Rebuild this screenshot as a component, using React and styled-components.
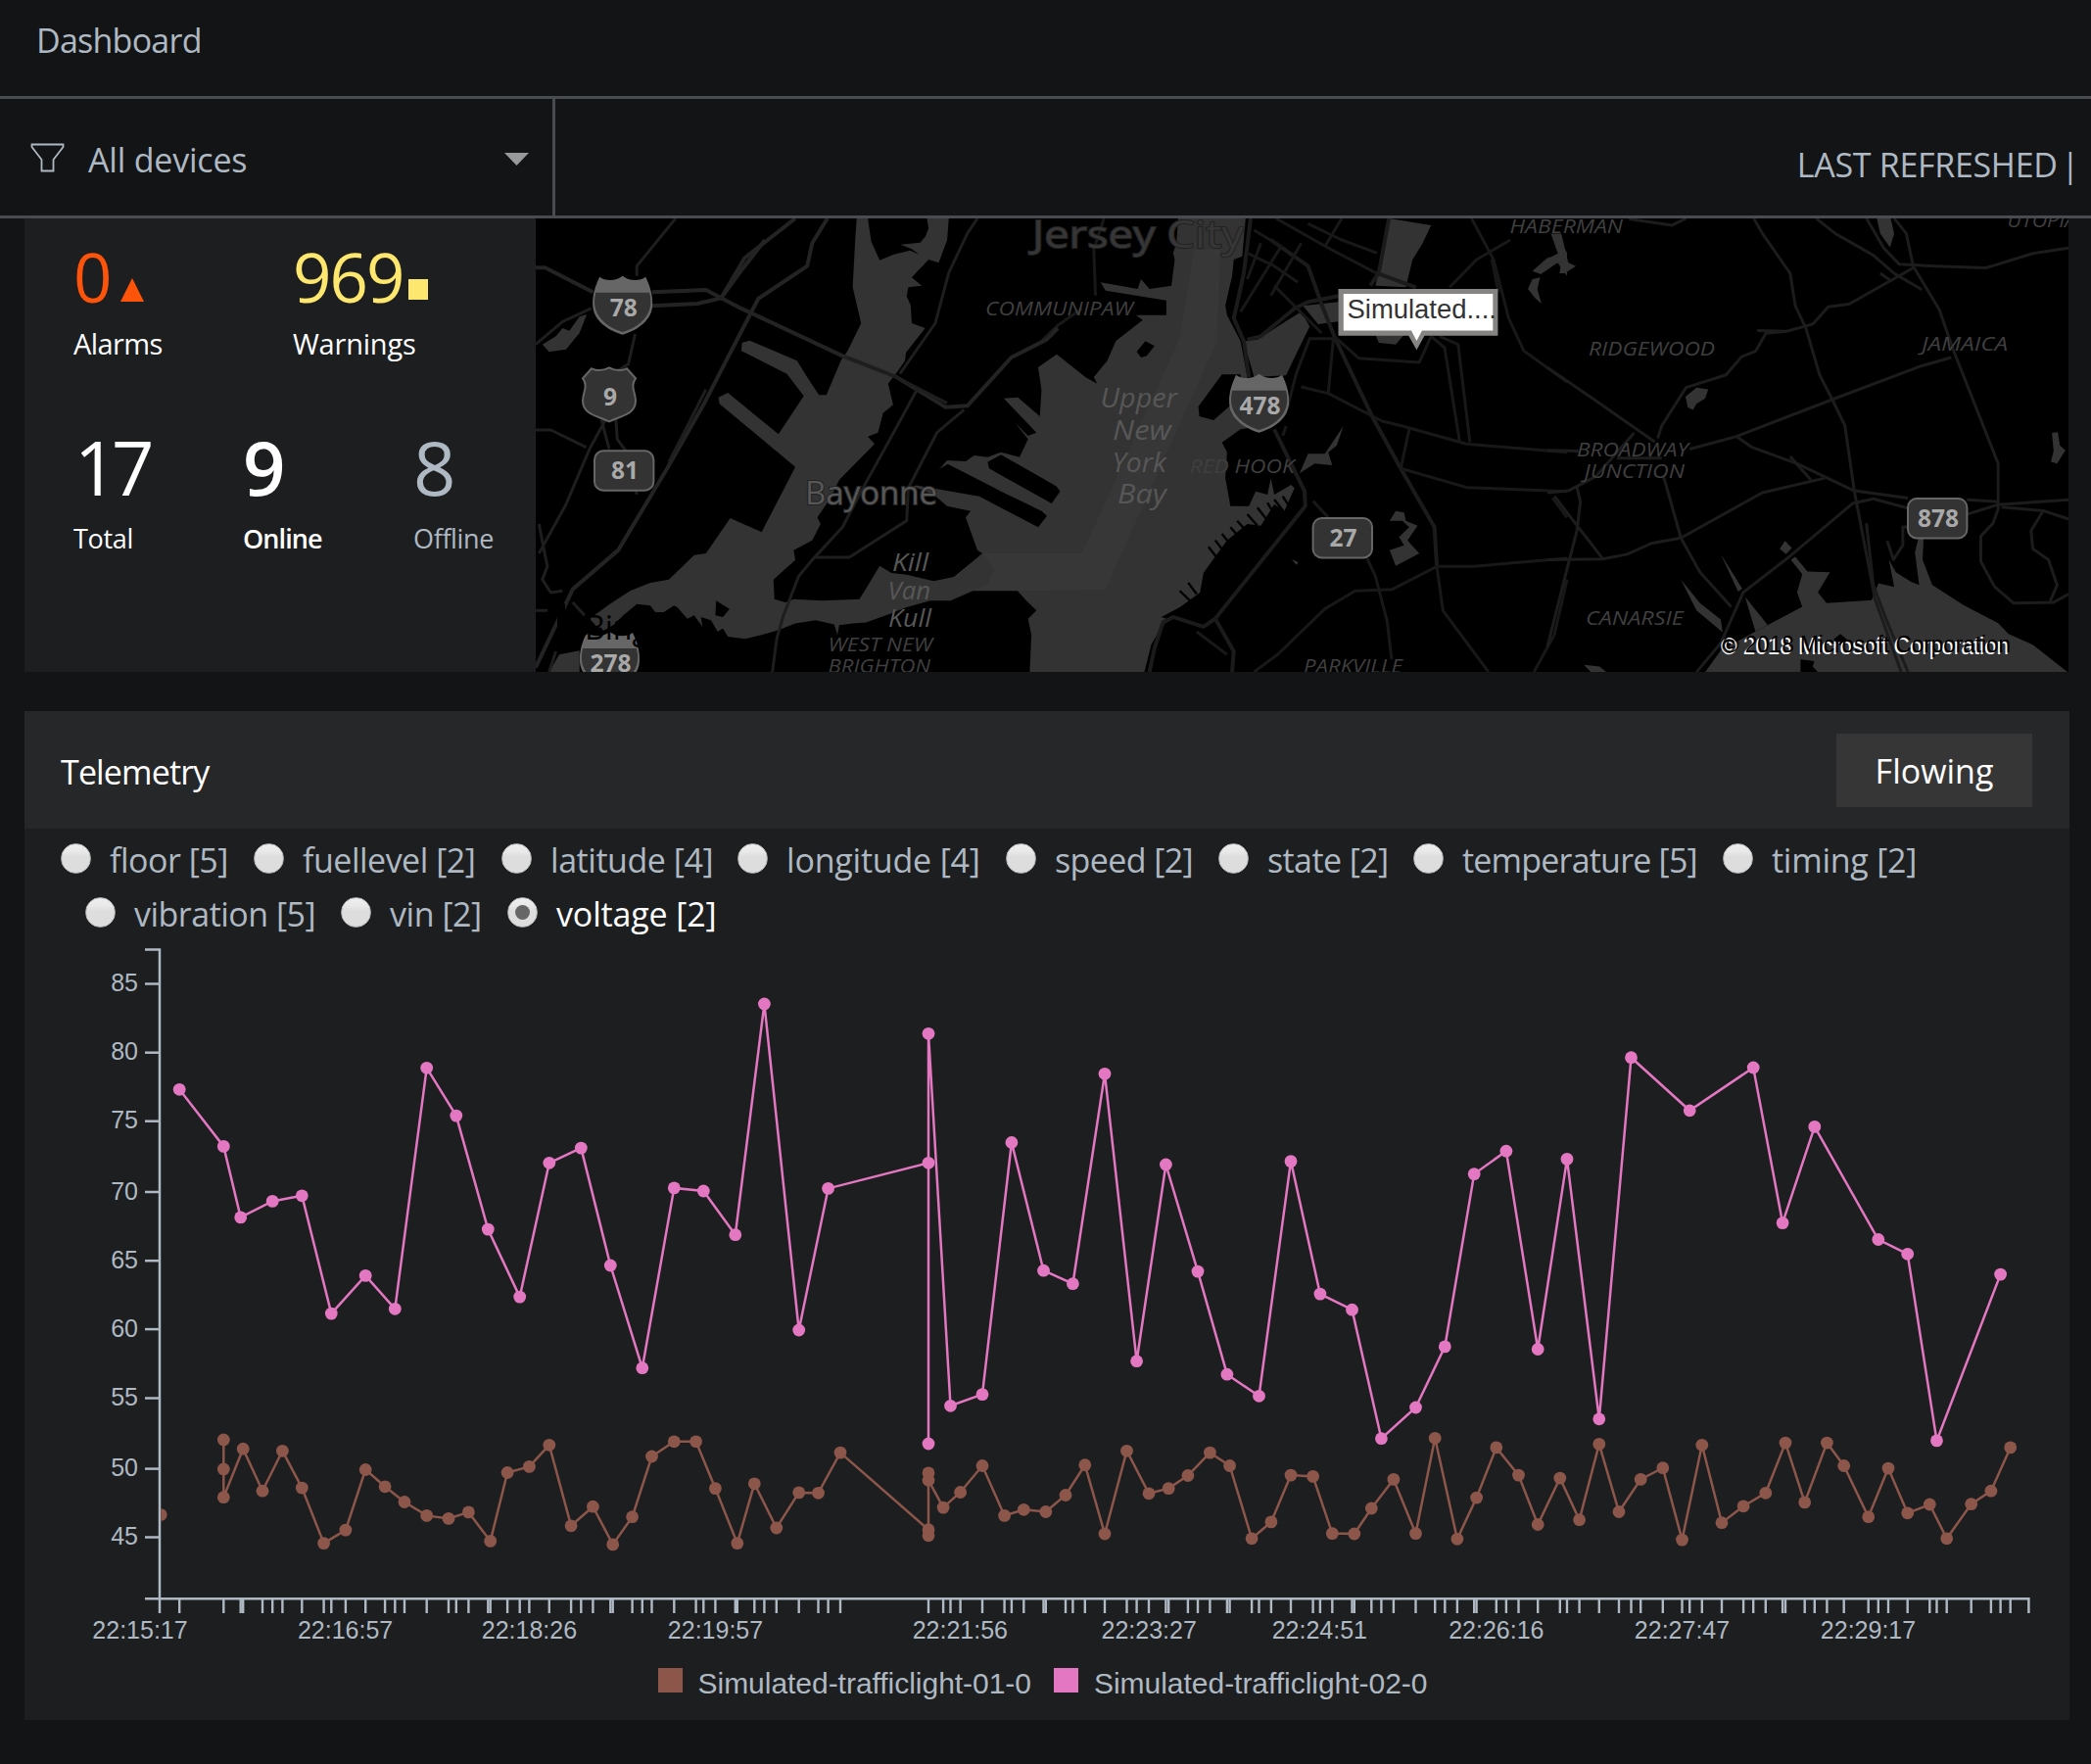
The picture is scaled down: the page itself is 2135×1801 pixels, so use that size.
import React from 'react';
import styled, { createGlobalStyle } from 'styled-components';

const UI_FONT = '"Open Sans", "Noto Sans", sans-serif';
const CHART_FONT = '"Liberation Sans", Arial, sans-serif';

const colors = {
  page: '#131416',
  panel: '#1d1e1f',
  panelHeader: '#262728',
  line: '#484c50',
  text: '#afb9c3',
  bright: '#ffffff',
  alarm: '#fc540a',
  warning: '#fee76e',
  button: '#363636',
  brown: '#8c564b',
  pink: '#e377c2',
};

const GlobalStyle = createGlobalStyle`
  body {
    margin: 0;
    background: ${colors.page};
    color: ${colors.text};
    font-family: ${UI_FONT};
    font-size: 34px;
    overflow: hidden;
  }
  * { box-sizing: border-box; }
`;

const Page = styled.div`
  display: flex;
  flex-direction: column;
  width: 2135px;
  height: 1801px;
  overflow: hidden;
`;

const Header = styled.header`
  flex: none;
  height: 101px;
  padding-left: 37px;
  border-bottom: 3px solid ${colors.line};
  line-height: 82px;
  letter-spacing: -0.75px;
`;

const Toolbar = styled.div`
  flex: none;
  display: flex;
  justify-content: space-between;
  height: 122px;
  border-bottom: 3px solid ${colors.line};
`;

const DeviceSelect = styled.div`
  display: flex;
  align-items: center;
  width: 567px;
  padding: 0 24px 0 31px;
  border-right: 3px solid ${colors.line};
`;

const SelectLabel = styled.span`
  flex: 1;
  margin-left: 24px;
  padding-top: 5px;
  letter-spacing: -0.2px;
`;

const Caret = styled.svg`
  flex: none;
  margin-top: 3px;
`;

const Refreshed = styled.div`
  display: flex;
  align-items: center;
  gap: 4px;
  padding: 14px 12px 0 0;
  letter-spacing: -0.3px;
`;

const Main = styled.main`
  display: flex;
  flex-direction: column;
  gap: 40px;
  padding: 0 22px 0 25px;
`;

const Overview = styled.section`
  display: flex;
  height: 463px;
`;

const Stats = styled.div`
  display: flex;
  flex-direction: column;
  gap: 56px;
  width: 522px;
  padding: 13px 0 0 50px;
  background: ${colors.panel};
`;

const StatRow = styled.div`
  display: grid;
  grid-template-columns: ${(p) => p.$columns};
`;

const Stat = styled.div`
  display: flex;
  flex-direction: column;
  gap: 3px;
  color: ${(p) => p.$color};
  font-weight: ${(p) => p.$weight || 400};
`;

const StatValue = styled.div`
  display: flex;
  align-items: flex-start;
  height: ${(p) => p.$line}px;
  padding-left: ${(p) => p.$inset || 0}px;
  color: ${(p) => p.$color || 'inherit'};
  font-size: ${(p) => p.$size}px;
  line-height: ${(p) => p.$line}px;
  letter-spacing: ${(p) => p.$track || 0}px;
`;

const StatLabel = styled.div`
  font-size: ${(p) => p.$size}px;
  line-height: 40px;
  letter-spacing: ${(p) => p.$track || 0}px;
`;

const StatGlyph = styled.svg`
  flex: none;
  margin: ${(p) => p.$margin};
`;

const MapCanvas = styled.svg`
  display: block;
  background: #000;
`;

const Telemetry = styled.section`
  display: flex;
  flex-direction: column;
  height: 1030px;
  background: ${colors.panel};
`;

const PanelHeader = styled.div`
  flex: none;
  display: flex;
  align-items: center;
  justify-content: space-between;
  height: 120px;
  padding: 0 38px 0 37px;
  background: ${colors.panelHeader};
  color: ${colors.bright};
`;

const PanelTitle = styled.h2`
  margin: 0;
  padding-top: 3px;
  font-size: 34px;
  font-weight: 400;
  letter-spacing: -0.85px;
`;

const FlowButton = styled.button`
  width: 200px;
  height: 75px;
  margin-top: 1px;
  padding: 0;
  border: 0;
  background: ${colors.button};
  color: ${colors.bright};
  font-family: inherit;
  font-size: 34px;
`;

const OptionList = styled.div`
  flex: none;
  display: flex;
  flex-direction: column;
  height: 114px;
  padding: 3px 0 0 37px;
`;

const OptionRow = styled.div`
  display: flex;
  height: 55px;
  padding-left: ${(p) => p.$indent || 0}px;
`;

const Option = styled.label`
  display: flex;
  align-items: center;
  gap: 19px;
  width: ${(p) => p.$width}px;
  color: ${(p) => (p.$selected ? colors.bright : colors.text)};
  letter-spacing: ${(p) => p.$track}px;
  white-space: nowrap;
`;

const OptionText = styled.span`
  padding-top: 2px;
`;

const Radio = styled.span`
  flex: none;
  display: flex;
  align-items: center;
  justify-content: center;
  width: 31px;
  height: 31px;
  border-radius: 50%;
  border: 1px solid #b4b4b4;
  background: linear-gradient(#eeeeee 0%, #e9e9e9 25%, #dddddd 45%, #dddddd 100%);
  &::after {
    content: '';
    display: ${(p) => (p.$selected ? 'block' : 'none')};
    width: 15px;
    height: 15px;
    border-radius: 50%;
    background: #666;
  }
`;

const Chart = styled.svg`
  flex: none;
  display: block;
`;

const Legend = styled.div`
  display: flex;
  justify-content: center;
  gap: 23px;
  margin-top: 9px;
  padding-right: 9px;
  font-family: ${CHART_FONT};
  font-size: 30px;
  line-height: 40px;
`;

const LegendItem = styled.div`
  display: flex;
  align-items: center;
  gap: 16px;
  letter-spacing: -0.03px;
`;

const Swatch = styled.span`
  width: 25px;
  height: 25px;
  margin-bottom: 7px;
  background: ${(p) => p.$color};
`;

/* ---------- telemetry options ---------- */

const optionRows = [
  {
    indent: 0,
    items: [
      ['floor [5]', 197, -0.5],
      ['fuellevel [2]', 253, -0.5],
      ['latitude [4]', 241, -0.45],
      ['longitude [4]', 274, -0.2],
      ['speed [2]', 217, -0.6],
      ['state [2]', 199, -0.6],
      ['temperature [5]', 316, -0.8],
      ['timing [2]', 200, -0.25],
    ],
  },
  {
    indent: 25,
    items: [
      ['vibration [5]', 261, -0.5],
      ['vin [2]', 170, -0.45],
      ['voltage [2]', 220, -0.15],
    ],
  },
];

/* ---------- chart ---------- */

const pinkPoints = [
  [183.2, 1112.3], [228.3, 1170.4], [245.7, 1242.9], [278.2, 1226.4], [308.3, 1220.8], [338.3, 1341.1],
  [373.2, 1302.4], [403.3, 1336.3], [435.7, 1090.3], [465.8, 1139.1], [498.3, 1255.1], [530.7, 1324.1],
  [560.8, 1187.3], [593.3, 1172.1], [623.3, 1292], [655.8, 1396.7], [688.3, 1212.9], [718.3, 1216],
  [750.8, 1260.7], [780.4, 1025], [815.7, 1358], [845.6, 1213.4], [948, 1187.3], [948, 1474],
  [948, 1055.3], [970.5, 1435.3], [1003, 1423.6], [1032.9, 1166.5], [1065.5, 1297.2], [1095.4, 1310.7],
  [1128, 1096.3], [1160.6, 1389.7], [1190.4, 1189], [1223, 1298.1], [1252.9, 1403.2], [1285.5, 1425.3],
  [1318, 1185.6], [1347.9, 1321.1], [1380.5, 1337.2], [1410.4, 1468.7], [1445.5, 1437], [1475.3, 1374.9],
  [1505.2, 1198.6], [1537.9, 1175.2], [1570.2, 1377.5], [1600, 1183.4], [1632.8, 1448.8], [1665.5, 1079.7],
  [1725.2, 1133.8], [1790.2, 1090], [1820.1, 1248.6], [1852.8, 1150.4], [1917.8, 1265.5], [1947.7, 1280.3],
  [1977.5, 1470.9], [2042.6, 1301.1],
];

const brownPoints = [
  [228.3, 1470], [228.3, 1500], [228.3, 1528.7], [248.2, 1479.2], [268, 1522.2], [288.4, 1481.3],
  [308.3, 1519.1], [330.6, 1575.6], [352.9, 1562.1], [373.2, 1500.5], [393.1, 1517.8], [413, 1533.5],
  [435.7, 1547.4], [458, 1550.4], [478.4, 1543.9], [500.7, 1573.4], [518.1, 1503.5], [540.4, 1497.4],
  [560.8, 1475.3], [583.1, 1557.8], [605.4, 1538.2], [625.7, 1576.9], [645.6, 1548.7], [665.5, 1487],
  [688.3, 1471.8], [710.6, 1471.8], [730.4, 1519.6], [752.8, 1575.6], [770.3, 1514.8], [792.8, 1560],
  [815.7, 1523.9], [835.5, 1524.3], [858, 1483.1], [948, 1561.7], [948, 1567.8], [948, 1503.9],
  [948, 1511.3], [963.1, 1539.1], [980.6, 1523.5], [1003, 1496.5], [1025.6, 1547.4], [1045.3, 1541.3],
  [1067.8, 1543.5], [1088, 1526.5], [1107.8, 1495.7], [1128, 1566], [1150.5, 1481.3], [1173, 1524.8],
  [1193.2, 1519.6], [1212.9, 1506.5], [1235.4, 1483.1], [1255.6, 1496.5], [1278.1, 1570.8], [1297.9, 1553.9],
  [1318, 1506.1], [1340.6, 1507.4], [1360.3, 1565.6], [1382.8, 1566], [1400.3, 1540], [1422.9, 1510.4],
  [1445.5, 1565.6], [1465.2, 1468.3], [1487.9, 1571.3], [1507.6, 1529.1], [1527.8, 1477.9], [1550.5, 1506.1],
  [1570.2, 1556.5], [1592.8, 1509.1], [1612.6, 1551.7], [1632.8, 1474.4], [1653, 1543.5], [1675.2, 1510.4],
  [1697.8, 1498.7], [1717.5, 1572.1], [1737.8, 1475.3], [1758, 1554.7], [1780.1, 1537.8], [1802.8, 1524.3],
  [1823, 1473.1], [1842.7, 1533.9], [1865.4, 1473.1], [1882.7, 1496.5], [1907.7, 1548.7], [1928, 1499.1],
  [1947.7, 1544.8], [1970.3, 1536], [1987.7, 1570.8], [2012.7, 1535.6], [2032.9, 1522.2], [2052.7, 1477.9],
];

const yTicks = [
  [85, 1004.5], [80, 1074.7], [75, 1144.7], [70, 1217], [65, 1287.2],
  [60, 1357.1], [55, 1427.5], [50, 1499.6], [45, 1569.5],
];

const xLabels = [
  ['22:15:17', 143], ['22:16:57', 352.6], ['22:18:26', 540.4], ['22:19:57', 730.5], ['22:21:56', 980.3],
  ['22:23:27', 1173.2], ['22:24:51', 1347.3], ['22:26:16', 1527.8], ['22:27:47', 1717.5], ['22:29:17', 1907.5],
];

const AXIS_LEFT = 163;
const AXIS_BOTTOM = 1632.3;
const AXIS_RIGHT = 2071.4;

const tickXs = Array.from(new Set([...pinkPoints, ...brownPoints].map(([x]) => x))).sort((a, b) => a - b);

function Series({ points, color }) {
  return (
    <g>
      <polyline points={points.map((p) => p.join(',')).join(' ')} fill="none" stroke={color} strokeWidth="2.5" />
      {points.map(([x, y], i) => (
        <circle key={i} cx={x} cy={y} r="6.4" fill={color} />
      ))}
    </g>
  );
}

function TelemetryChart() {
  return (
    <Chart width="2088" height="730" viewBox="25 960 2088 730">
      <g stroke={colors.text} strokeWidth="2.5" fill="none">
        <path d={`M148 969.5H${AXIS_LEFT}V${AXIS_BOTTOM}H148`} />
        {yTicks.map(([v, y]) => (
          <path key={v} d={`M148 ${y}H${AXIS_LEFT}`} />
        ))}
        <path d={`M${AXIS_LEFT} 1647V${AXIS_BOTTOM}H${AXIS_RIGHT}V1647`} />
        {tickXs.map((x) => (
          <path key={x} strokeWidth="2.4" d={`M${x} ${AXIS_BOTTOM}V1647`} />
        ))}
      </g>
      <g fill={colors.text} fontFamily={CHART_FONT} fontSize="25">
        {yTicks.map(([v, y]) => (
          <text key={v} x="141" y={y + 7.5} textAnchor="end">{v}</text>
        ))}
        {xLabels.map(([t, x]) => (
          <text key={t} x={x} y="1673" textAnchor="middle">{t}</text>
        ))}
      </g>
      <path d="M164.3 1540.2a6.3 6.3 0 0 1 0 12.6z" fill={colors.brown} />
      <Series points={brownPoints} color={colors.brown} />
      <Series points={pinkPoints} color={colors.pink} />
    </Chart>
  );
}

/* ---------- map ---------- */

const WATER = '#333333';

const areaLabels = [
  ['COMMUNIPAW', 1006, 1157, 322.3],
  ['WEST NEW', 845.5, 952, 665],
  ['BRIGHTON', 845.5, 950, 687],
  ['RED HOOK', 1214.7, 1321.7, 482.7],
  ['PARKVILLE', 1331, 1432, 686.5],
  ['HABERMAN', 1541.5, 1657, 237.6],
  ['UTOPIA', 2049.5, 2120, 232],
  ['RIDGEWOOD', 1622, 1751, 362.7],
  ['JAMAICA', 1962, 2050, 357.5],
  ['BROADWAY', 1610, 1724, 465.5],
  ['JUNCTION', 1617.5, 1720, 487.7],
  ['CANARSIE', 1619, 1718.8, 638],
];

const waterLabels = [
  ['Upper', 1123.5, 1202, 416, 27],
  ['New', 1136, 1196, 449, 27],
  ['York', 1135.5, 1190.9, 481.7, 27],
  ['Bay', 1141, 1191, 514, 27],
  ['Kill', 911, 948, 582.7, 25.5],
  ['Van', 906.5, 950, 611.7, 25.5],
  ['Kull', 907, 951, 640, 25.5],
];

function FittedText({ children, x1, x2, y, ...rest }) {
  return (
    <text x={x1} y={y} textLength={x2 - x1} lengthAdjust="spacingAndGlyphs" {...rest}>
      {children}
    </text>
  );
}

function Interstate({ x, y, children }) {
  const outline =
    'M7.5 1C14 6 25 5 31 0C37 5 48 6 54.5 1C59 10 62 20 61.5 30C61 44 48 55 31 60C14 55 1 44 .5 30C0 20 3 10 7.5 1Z';
  return (
    <g transform={`translate(${x} ${y})`}>
      <path d={outline} fill="#666" />
      <path d="M3.6 17H58.4C60 23 60 29 58.6 34C55 45 45 53 31 57.3C17 53 7 45 3.4 34C2 29 2 23 3.6 17Z" fill="#333" />
      <ShieldText x={32} y={41.3}>{children}</ShieldText>
    </g>
  );
}

function ShieldText({ x, y, children }) {
  return (
    <text x={x} y={y} textAnchor="middle" fontSize="24.5" fontWeight="700" fill="#a9a9a9">
      {children}
    </text>
  );
}

function StateRoute({ x, y, children }) {
  return (
    <g transform={`translate(${x} ${y})`}>
      <rect x="1" y="1" width="60.4" height="40.4" rx="9" fill="#333" stroke="#666" strokeWidth="2" />
      <ShieldText x={32} y={30}>{children}</ShieldText>
    </g>
  );
}

function Roads({ paths, width = 3, color = '#1e1e1e' }) {
  return (
    <g fill="none" stroke={color} strokeLinejoin="round">
      {paths.map((d) => (
        <path key={d} d={d} strokeWidth={width} vectorEffect="non-scaling-stroke" />
      ))}
    </g>
  );
}

function WestTile() {
  return (
    <g transform="translate(540 215) scale(.3444 .3333)">
      <path
        fill={WATER}
        d="M972 24L1005 24 1015 95 1040 152 1080 135 1130 122 1158 135 1135 118 1102 104 1160 98 1175 80 1185 55 1180 24 1245 24 1240 90 1215 160 1185 150 1135 205 1165 230 1125 235 1120 262 1132 290 1135 345 1175 360 1118 435 1115 460 1095 490 1065 530 1080 595 1050 620 1035 680 1005 692 1025 715 920 825 895 880 855 940 865 960 840 1010 785 1040 790 1070 725 1130 728 1190 760 1200 785 1190 870 1195 980 1190 1010 1140 1040 1088 1075 1110 1120 1115 1200 1135 1270 1120 1345 1050 1380 1100 1360 1145 1250 1195 1190 1195 1120 1215 1070 1235 1000 1262 960 1265 920 1270 915 1300 905 1268 850 1255 790 1265 740 1285 690 1300 640 1312 590 1305 575 1280 560 1290 540 1255 510 1245 515 1275 490 1240 470 1250 440 1215 430 1210 400 1230 375 1230 360 1210 320 1205 280 1240 250 1270 215 1290 180 1250 240 1205 300 1165 360 1140 415 1130 490 1055 525 1050 597 942 690 985 790 785 565 592 562 572 590 558 740 685 815 568 765 500 630 430 632 405 655 398 795 460 825 510 860 565 882 565 925 460 945 430 985 345 960 235 968 80Z"
      />
      <path fill={WATER} d="M40 410L80 385 100 360 120 368 150 325 172 318 150 375 110 425 60 433Z" />
      <path fill={WATER} d="M60 1413L90 1360 150 1348 150 1413Z" />
      <path fill="#000" d="M555 1195L595 1220 575 1245 553 1240Z" />
      <Roads
        width={4}
        color="#232323"
        paths={[
          'M20 175H48L190 250', 'M365 250L525 243 570 268 620 295 930 445 1090 510 1235 602 1300 598 1430 450 1535 395 1568 360',
          'M365 292L500 285 570 268 640 145 790 24', 'M885 24L840 100 825 170 680 270 520 590 410 790 265 1040 130 1160 20 1400',
          'M570 268L625 190 700 90',
        ]}
      />
      <Roads
        paths={[
          'M435 24L320 170V200', 'M315 378L295 470 265 490', 'M228 640L180 730 110 900 30 1050', 'M258 640L262 700 290 740 320 870',
          'M215 640L238 730', 'M20 672H65L170 725', 'M525 548L470 660 415 770', 'M1330 24L1300 70 1245 190 1205 345 1100 500',
          'M1150 550L1060 720 985 860 930 970 840 1070 800 1120 755 1240 735 1310 722 1413', 'M1290 610L1210 680 1125 850 1120 950 950 1062H845',
          'M945 450L1085 508 1240 590', 'M30 960L45 1040 55 1090 40 1130 65 1170 100 1165', 'M130 1200L165 1240', 'M20 410L100 340 185 300',
          'M60 1413L80 1350', 'M20 1225H55',
        ]}
      />
    </g>
  );
}

function HarbourTile() {
  return (
    <g transform="translate(1060 215) scale(.3444 .3333)">
      <path
        fill={WATER}
        d="M415 24L410 100 400 130 405 150 395 230 330 240 305 210 295 240 185 220 200 245 380 275 380 320 290 320 310 335 230 400 205 460 165 510 175 530 140 510 55 440 0 480 10 550 5 630 -60 572 -102 575 -5 680 -30 690 -70 648 -30 700 -55 755 -110 740 -150 755 -190 750 -215 768 -270 765 -300 800 -370 845 -310 870 -270 905 -200 920 -215 940 -180 1040 -165 1050 -130 1120 -150 1145 -70 1155 -35 1195 -5 1225 -30 1250 -20 1300 -25 1413 315 1413 335 1330 380 1250 365 1245 420 1215 480 1170 490 1110 560 1010 620 960 660 965 700 900 730 920 760 850 750 840 700 870 690 820 680 870 645 860 625 905 570 905 555 820 560 740 545 710 600 670 660 660 600 560 620 510 600 400 560 320 555 290 575 200 580 150 605 140 615 24Z"
      />
      <path fill="#373737" d="M462 120L540 120 530 400 200 1160 0 1165 -300 1165 -165 1050 130 1050 420 390Z" />
      <path fill="#000" d="M-150 770L-145 790 40 897 65 860 55 845 0 812 -110 748Z" />
      <path fill="#000" d="M-268 776L-370 840 -175 875 0 970 26 935 10 920 -110 860Z" />
      <path fill="#000" d="M475 600L545 502H600L600 570 520 642 478 630Z" />
      <path fill="#000" d="M292 432L318 400 345 415 322 445 305 450Z" />
      <path fill={WATER} d="M610 400L650 395 740 335 780 310 805 355 760 450 735 505 640 510Z" />
      <path fill={WATER} d="M785 292L890 280V340L830 348Z" />
      <path fill={WATER} d="M1040 24L1195 50 1165 45 1140 100 1110 150 1090 235 1000 230 1025 120Z" />
      <path fill={WATER} d="M1000 380H1085L1060 410 1010 405Z" />
      <path fill={WATER} d="M905 660L885 720 860 740 872 780 820 775 775 805 800 745 850 745Z" />
      <path fill={WATER} d="M1042 950L1060 920 1085 925 1090 950 1125 965 1095 1010 1130 1050 1060 1088 1042 1040 1085 1025 1070 1000 1100 970 1080 950Z" />
      <path fill={WATER} d="M1520 70L1545 85 1568 130V200L1540 160 1490 195 1465 185 1510 145 1555 135Z" />
      <path fill={WATER} d="M1465 210L1488 205 1480 240 1492 285 1475 270 1452 240Z" />
      <path fill={WATER} d="M752 1068L772 1078 765 1085Z" />
      <g stroke="#000" strokeWidth="7">
        <path d="M505 1030L535 1070M525 1010L555 1050M545 990L575 1030M570 970L600 1005M590 950L620 985M620 930L650 965M650 910L680 950M680 895L705 940M700 885L730 925M725 875L750 915M420 1165L450 1195M445 1140L470 1175" />
      </g>
      <Roads
        width={4}
        color="#1b1b1b"
        paths={[
          'M630 24L610 190 580 330 610 400 625 510', 'M620 395L660 385 760 300 800 280 890 262', 'M700 670L790 860 792 905 525 1250',
          'M525 1250L580 1350 575 1413', 'M525 1250L490 1275 400 1245 370 1262 345 1340 330 1413', 'M690 90L800 170 845 300 880 390 930 500 990 630 1075 790 1175 970 1182 1090',
          'M1040 24L1010 190 985 230', 'M1000 190L1120 235',
        ]}
      />
      <Roads
        color="#181818"
        paths={[
          'M735 660L725 690M740 600L765 500 805 392H885L950 452 1130 465 1165 385', 'M875 395L860 560', 'M780 540L860 560 1020 645 1080 660 1270 715 1568 740',
          'M1100 670L1075 790 1270 848 1568 860', 'M1182 1090L1050 1160 940 1165 850 1220 710 1360 640 1413', 'M1182 1090H1290L1568 1065', 'M1182 1090L1200 1225 1335 1413',
          'M975 1065L1000 1120 1035 1260 1048 1375', 'M815 890L860 940', 'M1400 90L1300 150 1220 235', 'M1285 24L1350 150 1395 330 1440 430 1568 525',
          'M1165 385L1205 420 1250 710M1190 385L1245 410 1280 710', 'M705 24L870 120 1000 190M800 40L900 90 1005 130', 'M640 60L720 110 600 310', 'M700 230L840 375M620 130L700 170 770 220M660 100L620 210',
          'M780 100L690 260', 'M470 1290L560 1360', 'M195 24L165 120 170 260M0 410L60 350 130 300', 'M1568 940L1525 880', 'M1568 1130L1530 1300 1470 1413', 'M900 24L850 110', 'M1345 150L1365 250',
        ]}
      />
    </g>
  );
}

function EastTile() {
  return (
    <g transform="translate(1580 120) scale(.354 .37)">
      <path
        fill={WATER}
        d="M455 1530L500 1470 600 1418 735 1350 720 1310 735 1260 702 1220 715 1212 750 1253 815 1255 780 1310 805 1340 935 1332 955 1285 1000 1295 985 1220 1005 1255 1050 1282 1072 1290 1060 1200 1070 1160 1085 1160 1082 1220 1110 1290 1200 1345 1300 1395 1330 1425 1400 1455 1500 1530Z"
      />
      <path fill={WATER} d="M500 1205L562 1300 550 1308ZM570 1322L635 1400 600 1418ZM385 1275L440 1340 500 1385 505 1420 430 1360ZM670 1190L685 1168 705 1188 688 1205Z" />
      <path fill={WATER} d="M398 770L430 745 464 750 455 775 430 790 420 807 405 800Z" />
      <path fill={WATER} d="M1455 870L1472 868 1478 905 1494 918 1470 955 1452 950 1460 920Z" />
      <path fill={WATER} d="M950 278H990L1000 320 988 358 960 320Z" />
      <path fill={WATER} d="M10 320H40L60 400 82 410 50 430 35 430 40 395 0 415V390L30 375Z" />
      <path fill={WATER} d="M105 1510L150 1515 170 1530H125Z" />
      <path fill="#000" d="M730 1495L770 1500 765 1515 780 1530H730ZM825 1440L845 1425 870 1445 850 1460Z" />
      <Roads
        color="#1c1c1c"
        paths={[
          'M595 278L620 320 700 430 715 520 745 580 785 710 820 775 858 850 885 1030 915 1180 945 1330 1020 1530',
          'M920 1120L940 1290 975 1380 1040 1530', 'M775 278L830 320 940 380 1000 430 1080 475', 'M920 278L970 360 1015 405 1120 410 1265 415 1400 375 1503 360',
          'M1000 278L1035 320 1055 410 1130 530 1170 640 1300 955V1080L1285 1120 1250 1155V1225L1290 1295 1345 1340 1460 1338 1503 1315',
          'M1055 415L870 515 810 522 765 570 690 590 630 595 600 645 560 660 515 710 400 745 330 850 318 885',
          'M410 915L545 880 830 775 1080 685 1165 662', 'M545 880L590 910 720 955 885 1030 1040 1050', 'M700 935L760 1000',
          'M0 1220L160 1218 230 1205 300 1175 385 1160 620 1035 800 995', 'M335 990L385 1160 440 1255 530 1350',
          'M430 1530L500 1450 565 1310 700 1210 880 1065 940 1052 1040 1078', 'M1210 1095L1300 1068 1503 1055M1210 1055L1300 1060',
          'M0 690L130 775 310 895', 'M0 918L90 920M0 1035L60 1030 140 990 250 870', 'M85 1020L95 1060 85 1140 50 1270 0 1460M20 1045L160 1218',
          'M235 280L360 297 400 278', 'M1430 1085L1395 1140 1400 1190 1445 1220 1470 1290 1450 1335', 'M1310 1075L1430 1085 1503 1108', 'M605 588L690 590', 'M960 430L990 450M980 1168L998 1220 1025 1180V1130H1040', 'M200 940H330',
        ]}
      />
    </g>
  );
}

function DeviceCallout() {
  return (
    <g>
      <path d="M1366.5 295H1529.4V342.7H1454.5L1446.4 357.3L1438.3 342.7H1366.5Z" fill="#868482" />
      <path d="M1371.8 300H1524.3V337.6H1452L1446.4 348L1441 337.6H1371.8Z" fill="#fff" />
      <FittedText x1={1375.5} x2={1528} y={325.3} fontFamily={CHART_FONT} fontSize="27.5" fill="#333">
        Simulated....
      </FittedText>
    </g>
  );
}

function DeviceMap() {
  return (
    <MapCanvas width="1565" height="463" viewBox="547 223 1565 463" fontFamily={UI_FONT}>
      <HarbourTile />
      <WestTile />
      <EastTile />
      <g fontStyle="italic" fontSize="20.5" fill="#3f3f3f">
        {areaLabels.map(([t, x1, x2, y]) => (
          <FittedText key={t} x1={x1} x2={x2} y={y}>{t}</FittedText>
        ))}
      </g>
      <g fontStyle="italic" fill="#575757">
        {waterLabels.map(([t, x1, x2, y, size]) => (
          <FittedText key={t} x1={x1} x2={x2} y={y} fontSize={size}>{t}</FittedText>
        ))}
      </g>
      <g stroke="#222" strokeWidth="2" paintOrder="stroke">
        <FittedText x1={1054} x2={1270} y={253.3} fontSize="39" fill="#363636">Jersey City</FittedText>
        <FittedText x1={822} x2={957} y={515} fontSize="32" fill="#575757">Bayonne</FittedText>
      </g>
      <Interstate x={604.7} y={281.7}>78</Interstate>
      <Interstate x={1254.6} y={381.7}>478</Interstate>
      <Interstate x={591.5} y={645}>278</Interstate>
      <g transform="translate(594 374.3)">
        <path
          d="M10 2Q19 6 28 1Q37 6 46 2L55 12C49 20 55 26 55 35C55 48 42 50 28 56C14 50 1 48 1 35C1 26 7 20 1 12Z"
          fill="#333" stroke="#666" strokeWidth="2"
        />
        <ShieldText x={29} y={40.2}>9</ShieldText>
      </g>
      <StateRoute x={606} y={459.3}>81</StateRoute>
      <StateRoute x={1339.6} y={528}>27</StateRoute>
      <StateRoute x={1947} y={508}>878</StateRoute>
      <FittedText x1={597} x2={663} y={653} fontSize="34" fill="#000">Bing</FittedText>
      <path d="M569 620L577 616V645L585 650L600 642L590 637L585 626L603 633V645L585 658L569 650Z" fill="#000" />
      <DeviceCallout />
      <g fontFamily={CHART_FONT} fontSize="23">
        <FittedText x1={1757} x2={2051} y={667.5} fill="#fff">© 2018 Microsoft Corporation</FittedText>
        <FittedText x1={1759} x2={2053} y={665.5} fill="#000">© 2018 Microsoft Corporation</FittedText>
      </g>
    </MapCanvas>
  );
}

export default function App() {
  return (
    <Page>
      <GlobalStyle />
      <Header>Dashboard</Header>
      <Toolbar>
        <DeviceSelect>
          <svg width="35" height="30" viewBox="0 0 35 30" fill="none" stroke={colors.text} strokeWidth="1.8">
            <path d="M1.5 1.5H33.5V4L23.5 17V28.5H11.5V17L1.5 4Z" />
          </svg>
          <SelectLabel>All devices</SelectLabel>
          <Caret width="25" height="13" viewBox="0 0 25 13">
            <path d="M0 0H25L12.5 13Z" fill="#999" />
          </Caret>
        </DeviceSelect>
        <Refreshed>
          <span>LAST REFRESHED</span>
          <span>|</span>
        </Refreshed>
      </Toolbar>
      <Main>
        <Overview>
          <Stats>
            <StatRow $columns="224px 1fr">
              <Stat $color={colors.bright}>
                <StatValue $size={69} $line={92} $color={colors.alarm}>
                  0
                  <StatGlyph $margin="48px 0 0 9px" width="24" height="24" viewBox="0 0 24 24">
                    <path d="M12 0L24 24H0Z" fill={colors.alarm} />
                  </StatGlyph>
                </StatValue>
                <StatLabel $size={29} $track={-0.6}>Alarms</StatLabel>
              </Stat>
              <Stat $color={colors.bright}>
                <StatValue $size={69} $line={92} $color={colors.warning} $track={-1.9}>
                  969
                  <StatGlyph $margin="49px 0 0 5px" width="20" height="21" viewBox="0 0 20 21">
                    <rect width="20" height="21" fill={colors.warning} />
                  </StatGlyph>
                </StatValue>
                <StatLabel $size={29} $track={-0.2}>Warnings</StatLabel>
              </Stat>
            </StatRow>
            <StatRow $columns="173px 174px 1fr">
              <Stat $color={colors.bright}>
                <StatValue $size={76} $line={100} $track={-5.5} $inset={1}>17</StatValue>
                <StatLabel $size={27} $track={-0.3}>Total</StatLabel>
              </Stat>
              <Stat $color={colors.bright} $weight={600}>
                <StatValue $size={76} $line={100}>9</StatValue>
                <StatLabel $size={27} $track={-0.9}>Online</StatLabel>
              </Stat>
              <Stat $color={colors.text}>
                <StatValue $size={76} $line={100}>8</StatValue>
                <StatLabel $size={27} $track={-0.35}>Offline</StatLabel>
              </Stat>
            </StatRow>
          </Stats>
          <DeviceMap />
        </Overview>
        <Telemetry>
          <PanelHeader>
            <PanelTitle>Telemetry</PanelTitle>
            <FlowButton>Flowing</FlowButton>
          </PanelHeader>
          <OptionList>
            {optionRows.map((row) => (
              <OptionRow key={row.indent} $indent={row.indent}>
                {row.items.map(([label, width, track]) => {
                  const selected = label.startsWith('voltage');
                  return (
                    <Option key={label} $width={width} $track={track} $selected={selected}>
                      <Radio $selected={selected} />
                      <OptionText>{label}</OptionText>
                    </Option>
                  );
                })}
              </OptionRow>
            ))}
          </OptionList>
          <TelemetryChart />
          <Legend>
            <LegendItem>
              <Swatch $color={colors.brown} />
              Simulated-trafficlight-01-0
            </LegendItem>
            <LegendItem>
              <Swatch $color={colors.pink} />
              Simulated-trafficlight-02-0
            </LegendItem>
          </Legend>
        </Telemetry>
      </Main>
    </Page>
  );
}
